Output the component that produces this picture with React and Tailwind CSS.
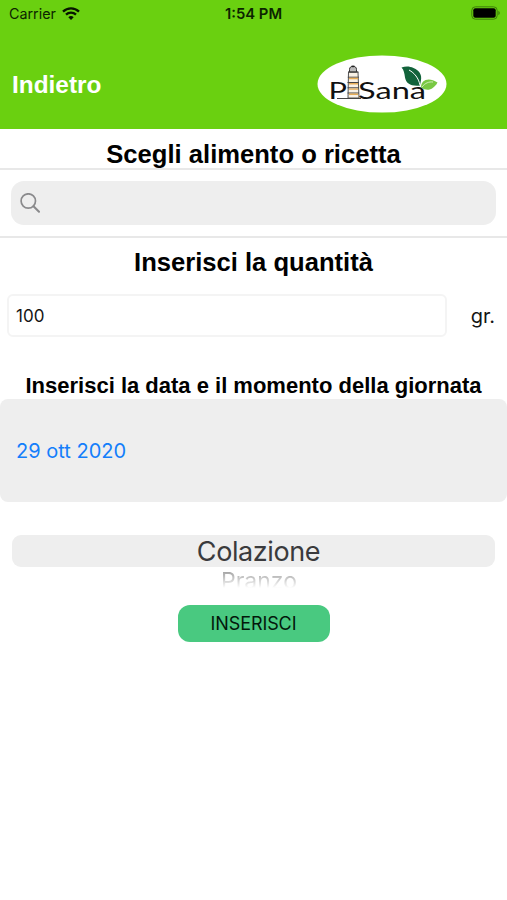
import React from "react";

const HEADING = "font-['Liberation_Sans',sans-serif] font-bold text-black text-center whitespace-nowrap";

function WifiIcon() {
  return (
    <svg viewBox="0 0 18 13" className="w-[18px] h-[13px] mb-[2px]" fill="none" stroke="#071500" strokeWidth="2.3">
      <path d="M1 4.7a11.5 11.5 0 0 1 16 0" />
      <path d="M4 7.7a7.2 7.2 0 0 1 10 0" />
      <path d="M9 13 6.3 10.2a4 4 0 0 1 5.4 0z" fill="#071500" stroke="none" />
    </svg>
  );
}

function BatteryIcon() {
  return (
    <svg viewBox="0 0 30 14" className="w-[30px] h-[14px] mb-[2px]">
      <rect x="0.8" y="0.8" width="25.4" height="12.4" rx="3.6" fill="none" stroke="#3f8109" strokeWidth="1" />
      <rect x="2.3" y="2.3" width="22.4" height="9.4" rx="2" fill="#000" />
      <path d="M27.3 4.8c2 .8 2 3.6 0 4.4z" fill="#3f8109" />
    </svg>
  );
}

function Logo() {
  return (
    <svg viewBox="0 0 130 58" className="w-[130px] h-[58px]" fontFamily="Lato, sans-serif" fontSize="23.5">
      <ellipse cx="65" cy="29" rx="64.5" ry="28.6" fill="#fff" />
      <text x="11.500" y="43.500" textLength="18.500" lengthAdjust="spacingAndGlyphs" fill="#111">
        P
      </text>
      {/* tower */}
      <path d="M31 43 31.500 17h9.500L42 43z" fill="#f8f1e6" stroke="#555" strokeWidth="1" />
      <path d="M32.500 17v-2.500c0-4.500 7-4.500 7 0V17z" fill="#bbb" stroke="#333" strokeWidth="1" />
      <path d="M34.500 11.500h3" stroke="#222" strokeWidth="1.400" />
      <path d="M31 17h10.500M30.800 22.200h11M30.500 27.500h11.500M30.500 32.800h11.500M30.500 38h11.500" stroke="#444" strokeWidth="1" />
      <path d="M32 23.500h9M32 28.800h9M32 34.100h9M32 39.300h9" stroke="#e6ad58" strokeWidth="1.400" />
      <path d="M20 43.500h24" stroke="#444" strokeWidth="1" />
      <text x="41" y="43.500" textLength="68" lengthAdjust="spacingAndGlyphs" fill="#111">
        Sana
      </text>
      {/* leaves */}
      <path d="M84.500 12.500c4 -1.500 8-1.500 12 .5 6 2.500 8.500 7 7.500 12-.3 1.500-.5 3-1 5.500-9 1-14-2-15-8-.600-4-1-7.500-3.500-10z" fill="#12633b" />
      <path d="M92 15c5.500 3 9.500 8 11 15" fill="none" stroke="#fff" strokeWidth="1" />
      <path d="M104 32.500c0-8 8-10.500 16.500-5-4 7-10 9.500-16.500 5z" fill="#79c843" />
      <path d="M105 32c3-4 7-5.500 11-5" fill="none" stroke="#d9f0c8" strokeWidth="0.900" />
    </svg>
  );
}

function Header() {
  return (
    <header className="h-[129px] bg-[#6ad010] flex flex-col">
      <div className="h-7 grid grid-cols-3 items-center pl-[9px] pr-[6px] text-[#0c2400]">
        <div className="flex items-center gap-[6px]">
          <span className="text-[14.3px]">Carrier</span>
          <WifiIcon />
        </div>
        <div className="text-center font-semibold whitespace-nowrap text-[14.8px] leading-[28px] -ml-[3px]">
          1:54 PM
        </div>
        <div className="flex justify-end">
          <BatteryIcon />
        </div>
      </div>
      <div className="flex-1 flex items-start justify-between pl-3 pr-[60px] pt-[27px]">
        <button className="h-[58px] pt-[2px] font-['Liberation_Sans',sans-serif] font-bold text-[24.4px] text-white">
          Indietro
        </button>
        <Logo />
      </div>
    </header>
  );
}

function SearchBar() {
  return (
    <div className="h-[70px] border-t-2 border-b-2 border-[#e8e8e8] px-[11px] pt-[11px]">
      <div className="h-[44px] rounded-[13px] bg-[#eeeeee] flex items-center pl-[9px]">
        <svg viewBox="0 0 20 20" className="w-5 h-5" fill="none" stroke="#8a8a8c" strokeWidth="1.700" strokeLinecap="round">
          <circle cx="8.300" cy="8" r="7.200" />
          <path d="m13.500 13.300 5.500 5.400" strokeWidth="2.100" />
        </svg>
      </div>
    </div>
  );
}

export default function App() {
  return (
    <div className="w-full h-[900px] overflow-hidden bg-white flex flex-col font-[Inter,sans-serif]">
      <Header />

      <h1 className={`${HEADING} h-[39px] text-[25.6px] leading-[50px]`}>Scegli alimento o ricetta</h1>
      <SearchBar />

      <h2 className={`${HEADING} h-14 text-[25.6px] leading-[49px]`}>Inserisci la quantità</h2>
      <div className="h-[43px] flex items-center justify-between pl-[7px] pr-[12px]">
        <div className="w-[440px] h-[43px] rounded-md border-2 border-[#f4f4f4] flex items-center pl-[7px] pt-[2px] text-[17px] text-[#151515]">
          100
        </div>
        <span className="text-[20px] text-[#151515]">gr.</span>
      </div>

      <h3 className={`${HEADING} mt-[36px] h-[26px] text-[22px] leading-[26px]`}>
        Inserisci la data e il momento della giornata
      </h3>
      <div className="h-[103px] rounded-lg bg-[#eeeeee] flex items-center pl-4 text-[20px] text-[#147efb]">
        29 ott 2020
      </div>

      <div className="mt-[33px] mx-3 h-8 rounded-[9px] bg-[#eeeeee] flex items-center justify-center pl-[10px] pt-[2px] text-[27px] tracking-[-0.4px] text-[#3a3a3c]">
        Colazione
      </div>
      <div className="h-[28px] text-center pl-[11px] text-[23px] leading-[28px] text-transparent bg-clip-text bg-linear-to-b from-[#8c8c8c] to-white to-75%">
        Pranzo
      </div>

      <button className="mt-[10px] mx-auto w-[152px] h-[37px] rounded-xl bg-[#49c980] text-[18px] tracking-[-0.1px] text-[#03180b]">
        INSERISCI
      </button>
    </div>
  );
}
